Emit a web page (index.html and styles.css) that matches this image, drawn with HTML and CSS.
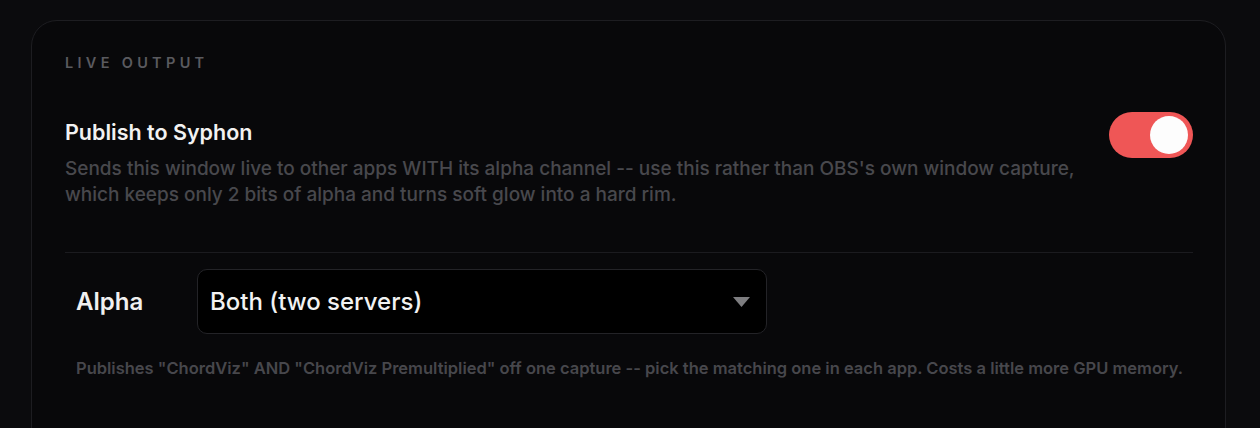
FILE: index.html
```html
<!DOCTYPE html>
<html>
<head>
<meta charset="utf-8">
<link rel="stylesheet" href="styles.css">
</head>
<body>
<div class="card">
  <div class="section-label">LIVE OUTPUT</div>
  <div class="toggle-row">
    <div class="toggle-text">
      <div class="title">Publish to Syphon</div>
      <div class="desc">Sends this window live to other apps WITH its alpha channel -- use this rather than OBS's own window capture, which keeps only 2 bits of alpha and turns soft glow into a hard rim.</div>
    </div>
    <div class="switch"><div class="knob"></div></div>
  </div>
  <div class="divider"></div>
  <div class="field">
    <div class="field-row">
      <div class="field-label">Alpha</div>
      <div class="select">
        <span class="select-value">Both (two servers)</span>
        <svg class="caret" width="17" height="10" viewBox="0 0 17 10"><polygon points="0,0 17,0 8.5,10" fill="#7d7d80"/></svg>
      </div>
    </div>
    <div class="help">Publishes "ChordViz" AND "ChordViz Premultiplied" off one capture -- pick the matching one in each app. Costs a little more GPU memory.</div>
  </div>
</div>
</body>
</html>
```
FILE: styles.css
```css
* { box-sizing: border-box; }
html, body { margin: 0; padding: 0; }
body {
  background: #0b0b0d;
  font-family: "Inter", "Noto Sans", sans-serif;
  width: 1260px;
  height: 428px;
  overflow: hidden;
}
.card {
  margin: 20px 0 0 31px;
  width: 1195px;
  height: 520px;
  border: 1.5px solid #1d1d21;
  border-radius: 26px;
  background: #08080a;
  padding: 33px 32px 0 33px;
}
.section-label {
  font-size: 14.5px;
  font-weight: 600;
  letter-spacing: 4.3px;
  color: #5a5a5f;
  line-height: 18px;
}
.toggle-row {
  display: flex;
  justify-content: space-between;
  align-items: flex-start;
  margin-top: 46.5px;
}
.title {
  font-size: 21.5px;
  font-weight: 600;
  color: #f2f2f2;
  line-height: 26px;
}
.desc {
  margin-top: 11px;
  font-size: 19px;
  font-weight: 500;
  line-height: 26px;
  color: #48484d;
  width: 1030px;
}
.switch {
  width: 84px;
  height: 46px;
  border-radius: 23px;
  background: #ef5656;
  display: flex;
  align-items: center;
  justify-content: flex-end;
  padding-right: 5px;
  margin-top: -6.5px;
}
.knob {
  width: 38px;
  height: 38px;
  border-radius: 50%;
  background: #fdfdfd;
}
.divider {
  height: 1.5px;
  background: #1b1b1f;
  margin-top: 44px;
}
.field {
  padding-left: 11px;
}
.field-row {
  display: flex;
  align-items: center;
  margin-top: 15.5px;
}
.field-label {
  width: 121px;
  font-size: 24px;
  font-weight: 600;
  color: #f0f0f0;
}
.select {
  width: 570px;
  height: 65px;
  background: #000;
  border: 1.5px solid #232327;
  border-radius: 10px;
  display: flex;
  align-items: center;
  justify-content: space-between;
  padding: 0 16px 0 12px;
}
.select-value {
  font-size: 24px;
  font-weight: 500;
  color: #f2f2f2;
}
.caret { display: block; margin-top: 1px; }
.help {
  margin-top: 23px;
  font-size: 16.5px;
  font-weight: 600;
  color: #47474c;
  line-height: 22px;
}
```
